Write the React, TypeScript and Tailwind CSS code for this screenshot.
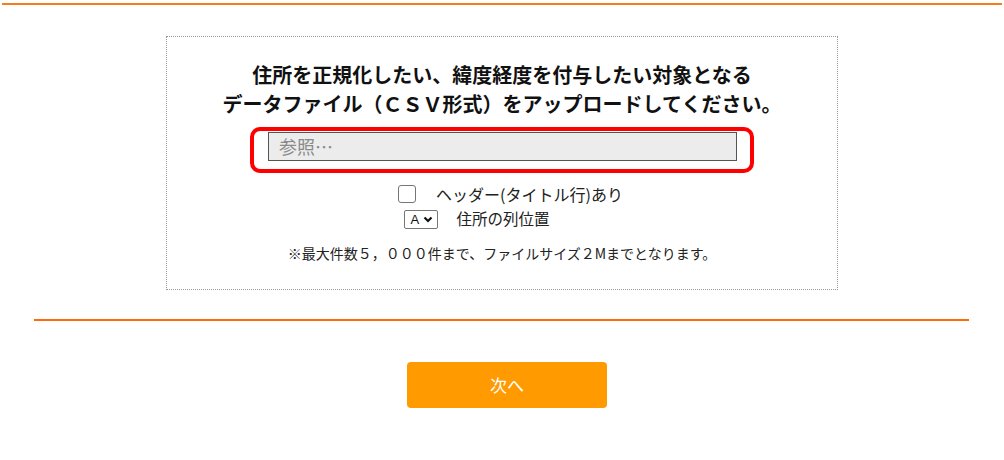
// 住所ファイルアップロード画面

const jp = "font-['Noto_Sans_CJK_JP','Noto_Sans',sans-serif]";

function Checkbox() {
  return <span className="block h-[18px] w-[18px] rounded-[3px] border border-[#767676] bg-white" />;
}

function ColumnSelect() {
  return (
    <span className="flex h-[19px] w-[34px] items-center justify-between rounded-[2px] border border-[#767676] bg-white pl-[5px] pr-[4px]">
      <span className="text-[13px] leading-none text-[#111] font-['Liberation_Sans',sans-serif]">A</span>
      <svg width="10" height="7" viewBox="0 0 10 7">
        <path d="M1.5 1.5 L5 5 L8.5 1.5" fill="none" stroke="#111" strokeWidth="2.2" />
      </svg>
    </span>
  );
}

export default function App() {
  return (
    <div className={`min-h-[460px] bg-white ${jp}`}>
      {/* Top line */}
      <div className="mx-[2px] mt-[3px] h-[2px] bg-[#f77d18]" />

      {/* Upload panel */}
      <div className="mx-auto mt-[31px] w-[672px] border border-dotted border-[#9a9a9a] pt-[23px] pb-[26px]">
        <h2 className="text-center text-[20px] font-bold leading-[29px] text-[#111]">
          住所を正規化したい、緯度経度を付与したい対象となる
          <br />
          データファイル（ＣＳＶ形式）をアップロードしてください。
        </h2>

        <div className="mx-auto mt-[9px] w-[504px] rounded-[10px] border-4 border-[#ff0000] pt-[1px] pb-[8px] pl-[14px] pr-[13px]">
          <div className="flex h-[29px] items-center border border-[#555] bg-[#ececec] pl-[10px] text-[18px] text-[#8a8a8a]">
            参照…
          </div>
        </div>

        <div className="mt-[11px] flex h-[20px] items-center justify-center gap-[20px] pl-[17px] text-[16px] text-[#222]">
          <Checkbox />
          <span>ヘッダー(タイトル行)あり</span>
        </div>

        <div className="mt-[5px] flex h-[20px] items-center justify-center gap-[18px] pr-[50px] text-[15.5px] text-[#222]">
          <ColumnSelect />
          <span>住所の列位置</span>
        </div>

        <p className="mt-[14px] text-center text-[14px] leading-[20px] text-[#222]">
          ※最大件数５，０００件まで、ファイルサイズ２Mまでとなります。
        </p>
      </div>

      {/* Divider */}
      <div className="mt-[29px] ml-[34px] mr-[35px] h-[2px] bg-[#ff6d0a]" />

      {/* Next button */}
      <div className="mt-[41px] flex justify-center pl-[10px]">
        <button className="h-[46px] w-[200px] rounded-[4px] bg-[#ff9a00] text-[17px] text-white">
          次へ
        </button>
      </div>
    </div>
  );
}
